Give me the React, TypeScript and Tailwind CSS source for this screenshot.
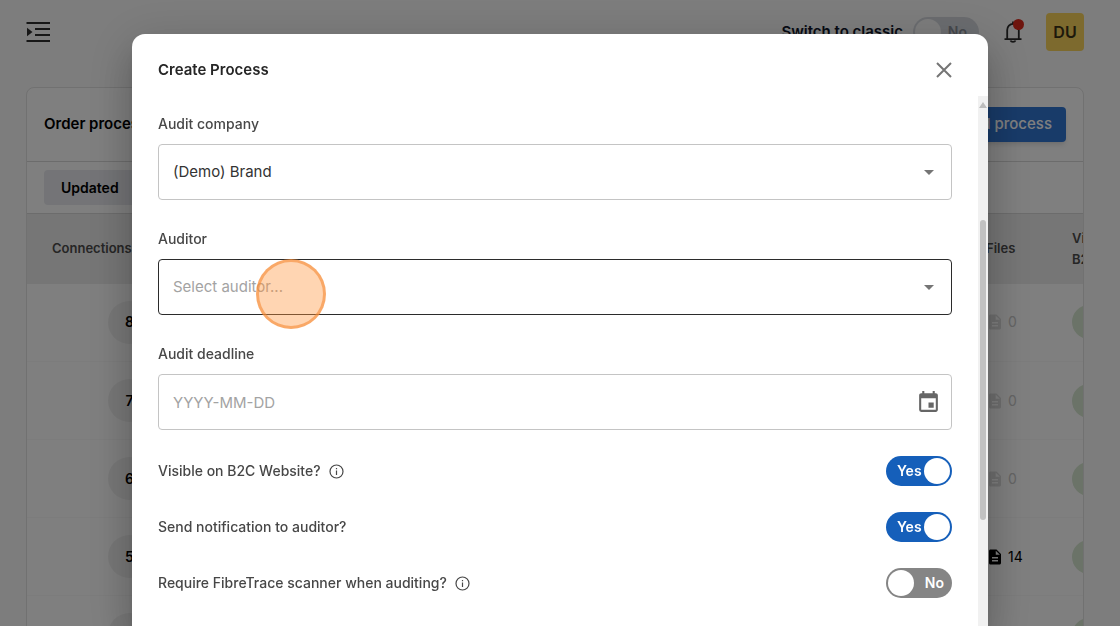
import { useState } from "react";
import type { ReactNode } from "react";
import { MdArrowDropDown, MdDescription, MdEvent } from "react-icons/md";

const rows = [
  { connections: 8, files: 0 },
  { connections: 7, files: 0 },
  { connections: 6, files: 0 },
  { connections: 5, files: 14 },
  { connections: 4, files: 0 },
];

const labelStyle = "text-sm leading-5 font-medium text-[#474747]";
const fieldStyle =
  "w-full h-14 rounded-[4px] border bg-white px-3.5 text-[15px] outline-none";

function MenuIcon() {
  return (
    <svg width="24" height="24" viewBox="0 0 24 24" fill="#2e2e2e">
      <path d="M0.500 2H24v2H0.500zM9 8H24v2H9zM9 14H24v2H9zM0.500 20H24v2H0.500z" />
      <path d="M1 7.800v8.400L6.500 12z" />
    </svg>
  );
}

function BellIcon() {
  return (
    <svg
      width="18"
      height="22"
      viewBox="0 0 18 22"
      fill="none"
      stroke="#2b2b2b"
      strokeWidth="1.8"
    >
      <path d="M9 0.500v2.500M3.200 18V9a5.800 6.200 0 0 1 11.600 0v9M0.500 18.200h17" />
      <path d="M6.500 19.500a2.600 1.800 0 0 0 5 0" />
    </svg>
  );
}

function InfoIcon() {
  return (
    <svg width="15" height="15" viewBox="0 0 15 15" fill="none" stroke="#474747">
      <circle cx="7.5" cy="7.5" r="6.5" strokeWidth="1.2" />
      <path d="M7.500 6.500v4.500M7.500 3.900v1.400" strokeWidth="1.2" />
    </svg>
  );
}

function CloseIcon() {
  return (
    <svg
      width="16"
      height="16"
      viewBox="0 0 16 16"
      fill="none"
      stroke="#757575"
      strokeWidth="2"
    >
      <path d="M1 1l14 14M15 1L1 15" />
    </svg>
  );
}

function Header() {
  return (
    <header className="flex items-center justify-between">
      <button type="button" aria-label="Open menu">
        <MenuIcon />
      </button>
      <div className="flex items-center">
        <label
          htmlFor="classic"
          className="text-[15px] font-semibold text-[#0f172a]"
        >
          Switch to classic
        </label>
        <label className="ml-2.5 flex h-[30px] w-[66px] items-center justify-between rounded-full bg-[#d6d9df] pl-0.5 pr-3">
          <input
            id="classic"
            type="checkbox"
            role="switch"
            className="sr-only"
          />
          <span className="size-[26px] rounded-full bg-[#fafafa]" />
          <span className="text-sm font-semibold text-[#8b909a]">No</span>
        </label>
        <button
          type="button"
          aria-label="Notifications"
          className="relative ml-[25px]"
        >
          <BellIcon />
          <span className="absolute -right-0.5 -top-0.5 size-[11px] rounded-full bg-[#dc2a1c]" />
        </button>
        <button
          type="button"
          className="ml-6 size-[38px] rounded-[4px] bg-[#fbd45c] text-base font-semibold text-[#3a3217]"
        >
          DU
        </button>
      </div>
    </header>
  );
}

function ProcessTable() {
  return (
    <table className="w-[calc(100%+100px)] table-fixed border-collapse text-left">
      <thead>
        <tr className="h-[70px] border-t border-[#d9d9d9] bg-[#ededed] text-[13px] leading-[21px] text-[#4c4c4c]">
          <th className="w-[200px] pl-[25px] font-semibold">Connections</th>
          <th />
          <th className="w-[86px] font-semibold">Files</th>
          <th className="w-[111px] pr-12 font-semibold">Visible B2C</th>
        </tr>
      </thead>
      <tbody>
        {rows.map((row) => (
          <tr
            key={row.connections}
            className="h-[78px] border-b border-[#f8f8f8] text-sm"
          >
            <td className="pl-[81px]">
              <span className="flex size-[43px] items-center justify-center rounded-full bg-[#f1f1f1] font-semibold">
                {row.connections}
              </span>
            </td>
            <td />
            <td>
              <span
                className={`flex items-center gap-1 ${
                  row.files > 0 ? "text-black" : "text-[#c9c9c9]"
                }`}
              >
                <MdDescription
                  className={`size-[18px] ${
                    row.files > 0 ? "text-black" : "text-[#dedede]"
                  }`}
                />
                {row.files}
              </span>
            </td>
            <td>
              <span className="block h-[34px] w-[70px] rounded-full bg-[#d6e6d1]" />
            </td>
          </tr>
        ))}
      </tbody>
    </table>
  );
}

function ProcessPage() {
  return (
    <div className="h-screen overflow-hidden bg-[#fafafa] pl-[26px] pr-9 pt-[13px]">
      <Header />
      <main className="mt-9 overflow-hidden rounded-lg border border-[#e2e2e2] bg-white">
        <div className="flex h-[74px] items-center justify-between border-b border-[#d9d9d9] px-[17px]">
          <h1 className="text-[15px] font-semibold">Order processes</h1>
          <button
            type="button"
            className="h-[35px] rounded-[4px] bg-[#3176d3] px-3.5 text-[15px] font-medium text-white shadow-md"
          >
            Add process
          </button>
        </div>
        <div className="flex h-[51px] items-center px-[17px]">
          <button
            type="button"
            className="h-[35px] rounded-[4px] bg-[#e8e9ee] px-[17px] text-sm font-semibold"
          >
            Updated
          </button>
        </div>
        <ProcessTable />
      </main>
    </div>
  );
}

function SelectField(props: {
  id: string;
  label: string;
  options: string[];
  active?: boolean;
  children?: ReactNode;
}) {
  const { id, label, options, active, children } = props;

  return (
    <div className="flex flex-col gap-2.5">
      <label htmlFor={id} className={labelStyle}>
        {label}
      </label>
      <div className="relative">
        <select
          id={id}
          className={`${fieldStyle} appearance-none ${
            active
              ? "border-[#2b2b2b] text-[#a3a3a3]"
              : "border-[#c4c4c4] text-[#333333]"
          }`}
        >
          {options.map((option) => (
            <option key={option}>{option}</option>
          ))}
        </select>
        <MdArrowDropDown className="pointer-events-none absolute inset-y-0 right-[11px] my-auto size-6 text-[#757575]" />
        {children}
      </div>
    </div>
  );
}

function SwitchRow(props: {
  id: string;
  label: string;
  info?: boolean;
  initial: boolean;
}) {
  const { id, label, info, initial } = props;
  const [on, setOn] = useState(initial);

  return (
    <div className="flex items-center justify-between">
      <div className="flex items-center gap-2">
        <label htmlFor={id} className={labelStyle}>
          {label}
        </label>
        {info && <InfoIcon />}
      </div>
      <label
        className={`flex h-[30px] w-[66px] cursor-pointer items-center justify-between rounded-full text-sm font-semibold text-white ${
          on
            ? "flex-row-reverse bg-[#155fba] pl-[11px] pr-0.5"
            : "bg-[#858585] pl-0.5 pr-2"
        }`}
      >
        <input
          id={id}
          type="checkbox"
          role="switch"
          checked={on}
          onChange={() => setOn(!on)}
          className="sr-only"
        />
        <span className="size-[26px] rounded-full bg-white" />
        <span>{on ? "Yes" : "No"}</span>
      </label>
    </div>
  );
}

function CreateProcessDialog() {
  return (
    <div className="fixed inset-0 flex justify-center overflow-hidden bg-black/50 pt-[34px]">
      <div
        role="dialog"
        aria-labelledby="dialog-title"
        className="flex w-full max-w-[856px] flex-col overflow-hidden rounded-t-[13px] bg-white shadow-[0_11px_15px_-7px_rgba(0,0,0,0.2),0_24px_38px_3px_rgba(0,0,0,0.14),0_9px_46px_8px_rgba(0,0,0,0.12)]"
      >
        <div className="flex h-[62px] shrink-0 items-center justify-between pb-1.5 pl-[26px] pr-9 pt-4">
          <h2
            id="dialog-title"
            className="text-[15px] font-semibold text-[#262626]"
          >
            Create Process
          </h2>
          <button type="button" aria-label="Close">
            <CloseIcon />
          </button>
        </div>

        <div className="flex min-h-0 flex-1">
          <form className="flex flex-1 flex-col gap-[26px] px-[26px] pt-[18px]">
            <div className="flex flex-col gap-[29px]">
              <SelectField
                id="company"
                label="Audit company"
                options={["(Demo) Brand"]}
              />
              <SelectField
                id="auditor"
                label="Auditor"
                options={["Select auditor..."]}
                active
              >
                <span className="pointer-events-none absolute left-[98px] top-0 size-[70px] rounded-full border-[3px] border-[#f58a35]/60 bg-[#ff973f]/40" />
              </SelectField>
              <div className="flex flex-col gap-2.5">
                <label htmlFor="deadline" className={labelStyle}>
                  Audit deadline
                </label>
                <div className="relative">
                  <input
                    id="deadline"
                    type="text"
                    placeholder="YYYY-MM-DD"
                    className={`${fieldStyle} border-[#c4c4c4] placeholder:text-[#a3a3a3]`}
                  />
                  <button
                    type="button"
                    aria-label="Choose date"
                    className="absolute inset-y-0 right-[11px] my-auto h-[25px]"
                  >
                    <MdEvent className="size-[25px] text-[#666666]" />
                  </button>
                </div>
              </div>
            </div>

            <SwitchRow id="b2c" label="Visible on B2C Website?" info initial />
            <SwitchRow id="notify" label="Send notification to auditor?" initial />
            <SwitchRow
              id="scanner"
              label="Require FibreTrace scanner when auditing?"
              info
              initial={false}
            />
          </form>

          <div
            aria-hidden="true"
            className="flex w-2.5 flex-col items-center bg-[#f1f1f1] pt-1.5"
          >
            <svg width="8" height="6" viewBox="0 0 8 6" fill="#bdbdbd">
              <path d="M4 0l4 6H0z" />
            </svg>
            <span className="mt-28 h-[300px] w-1.5 rounded-full bg-[#c1c1c1]" />
          </div>
        </div>
      </div>
    </div>
  );
}

export default function App() {
  return (
    <div className="font-['Inter',sans-serif] text-black">
      <ProcessPage />
      <CreateProcessDialog />
    </div>
  );
}
